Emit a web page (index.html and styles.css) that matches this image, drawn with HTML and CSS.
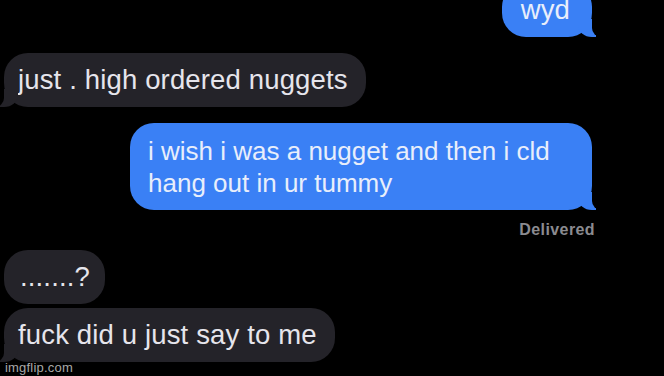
FILE: index.html
```html
<!DOCTYPE html>
<html lang="en">

<head>
    <meta charset="UTF-8">
    <meta name="viewport" content="width=device-width, initial-scale=1.0">
    <title>wyd</title>
    <link rel="stylesheet" href="styles.css">
</head>

<body>
    <main class="thread">
        <div class="bubble sent first">wyd</div>
        <div class="bubble received gap-md">just . high ordered nuggets</div>
        <div class="bubble sent wide gap-md">i wish i was a nugget and then i cld hang out in ur tummy</div>
        <div class="status">Delivered</div>
        <div class="bubble received no-tail dots">.......?</div>
        <div class="bubble received gap-sm">fuck did u just say to me</div>
    </main>
    <div class="watermark">imgflip.com</div>
</body>

</html>
```

FILE: styles.css
```css
body {
    margin: 0;
    height: 376px;
    overflow: hidden;
    background-color: #000;
    font-family: "Liberation Sans", Arial, sans-serif;
    position: relative;
}

.thread {
    width: 592px;
    display: flex;
    flex-direction: column;
    align-items: flex-start;
}

.bubble {
    position: relative;
    box-sizing: border-box;
    font-size: 27.5px;
    line-height: 30px;
    letter-spacing: 0.15px;
    padding: 12px 18px 12px 14px;
    border-radius: 24px;
    white-space: nowrap;
}

.received {
    margin-left: 4px;
    background-color: #242329;
    color: #e6e5ec;
}

.sent {
    align-self: flex-end;
    background-color: #3a80f5;
    color: #e8eefb;
}

.first {
    margin-top: -17px;
    padding: 12px 22px 12px 19px;
}

.wide {
    width: 462px;
    white-space: normal;
    font-size: 26px;
    line-height: 32px;
    letter-spacing: 0;
    padding: 11.5px 18px;
}

.gap-md {
    margin-top: 16px;
}

.gap-sm {
    margin-top: 4px;
}

.dots {
    margin-top: 10px;
    padding-left: 16px;
    padding-right: 15px;
}

/* tails */
.bubble::before,
.bubble::after {
    content: "";
    position: absolute;
    bottom: 0;
    height: 18px;
}

.received::before {
    left: -4px;
    width: 18px;
    background-color: #242329;
    border-bottom-right-radius: 14px 12px;
}

.received::after {
    left: -14px;
    width: 14px;
    background-color: #000;
    border-bottom-right-radius: 9px;
}

.sent::before {
    right: -4px;
    width: 18px;
    background-color: #3a80f5;
    border-bottom-left-radius: 14px 12px;
}

.sent::after {
    right: -14px;
    width: 14px;
    background-color: #000;
    border-bottom-left-radius: 9px;
}

.no-tail::before,
.no-tail::after {
    display: none;
}

.status {
    align-self: flex-end;
    margin-top: 10px;
    margin-right: -3px;
    font-size: 16px;
    line-height: 20px;
    font-weight: bold;
    letter-spacing: 0.4px;
    color: #8b8b90;
}

.watermark {
    position: absolute;
    left: 5px;
    top: 360px;
    font-size: 13px;
    line-height: 15px;
    color: #a8a8a8;
    letter-spacing: 0.2px;
    text-shadow: 0 0 2px #000;
}
```
